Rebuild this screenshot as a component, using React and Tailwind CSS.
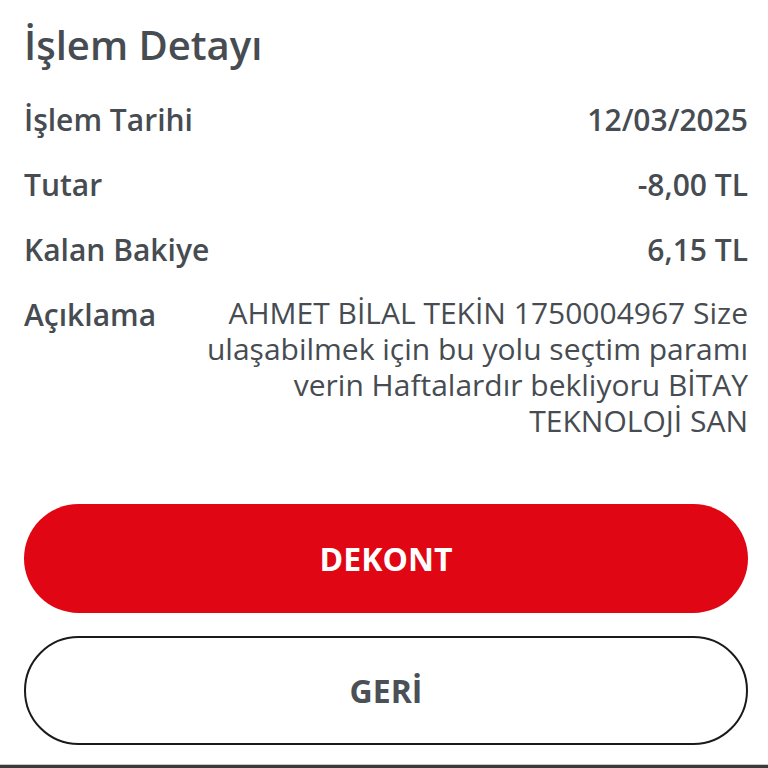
export default function App() {
  const rows = [
    { label: "İşlem Tarihi", value: "12/03/2025" },
    { label: "Tutar", value: "-8,00 TL" },
    { label: "Kalan Bakiye", value: "6,15 TL" },
  ];

  return (
    <div
      className="w-[768px] h-[768px] bg-white flex flex-col text-[#464c51] overflow-hidden"
      style={{ fontFamily: "'Open Sans', 'Noto Sans', sans-serif" }}
    >
      <div className="flex-1 pl-[24px] pr-[20px]">
        {/* Title */}
        <h1 className="text-[40px] leading-[48px] font-semibold mt-[21px]">İşlem Detayı</h1>

        {/* Rows */}
        <div className="mt-[31px] flex flex-col gap-[25px]">
          {rows.map((r) => (
            <div key={r.label} className="flex justify-between items-center text-[30px] leading-[40px] font-semibold">
              <span>{r.label}</span>
              <span>{r.value}</span>
            </div>
          ))}
          <div className="flex justify-between items-start text-[30px] leading-[40px]">
            <span className="font-semibold">Açıklama</span>
            <p className="w-[560px] text-right text-[30px] leading-[36px]">
              AHMET BİLAL TEKİN 1750004967 Size ulaşabilmek için bu yolu seçtim paramı verin Haftalardır bekliyoru BİTAY TEKNOLOJİ SAN
            </p>
          </div>
        </div>

        {/* Buttons */}
        <div className="mt-[65px] flex flex-col gap-[23px]">
          <button className="h-[109px] w-full rounded-full bg-[#e00613] text-white text-[32px] font-bold">
            DEKONT
          </button>
          <button className="h-[109px] w-full rounded-full border-2 border-[#1a1a1a] bg-white text-[#4a5056] text-[32px] font-bold">
            GERİ
          </button>
        </div>
      </div>

      {/* bottom edge */}
      <div className="h-[1px] bg-[#c8c8c8]" />
      <div className="h-[3px] bg-[#3a3a3a]" />
    </div>
  );
}
